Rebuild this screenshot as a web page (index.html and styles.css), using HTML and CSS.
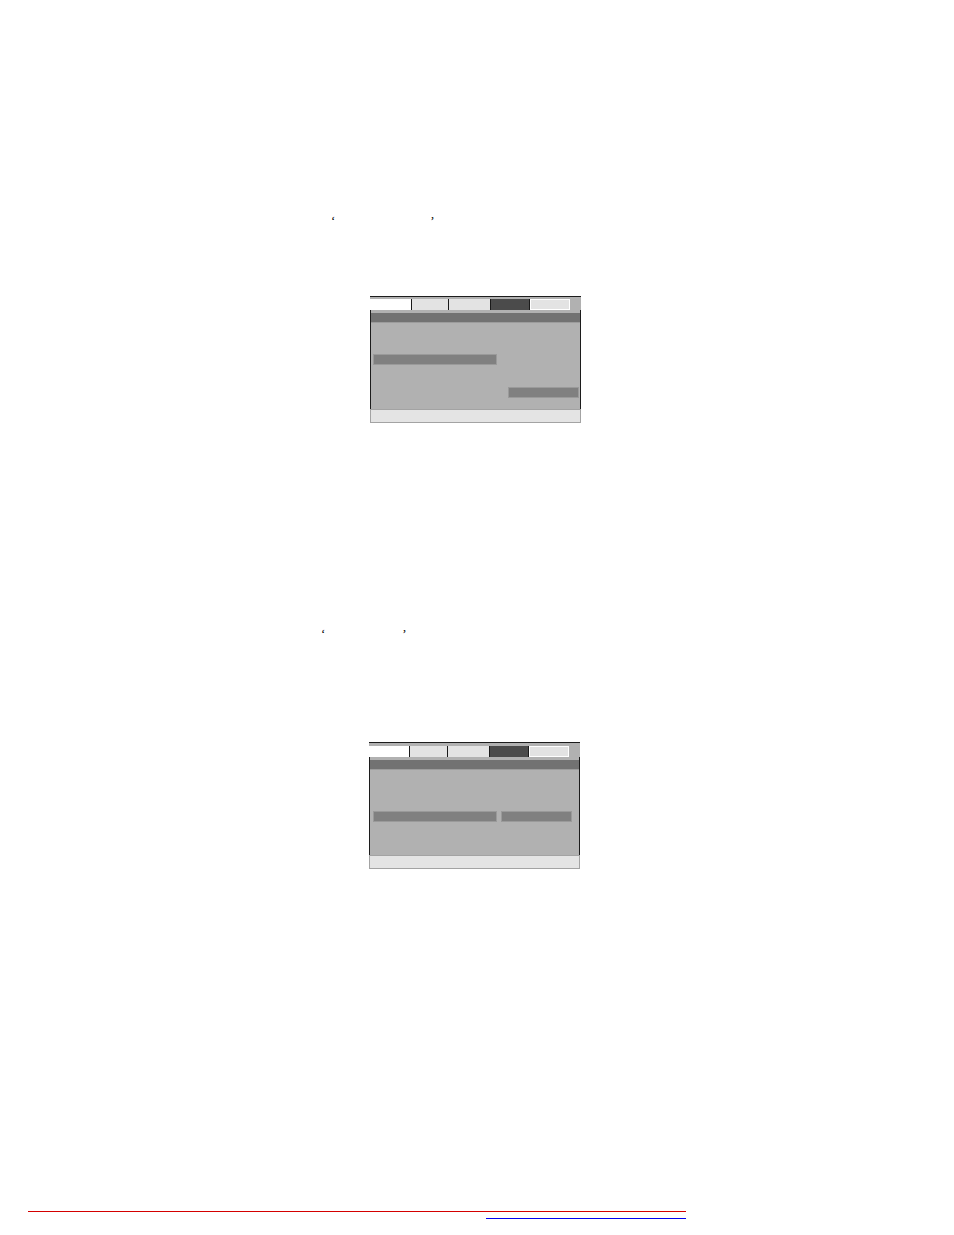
FILE: index.html
```html
<!DOCTYPE html>
<html>
<head>
<meta charset="utf-8">
<link rel="stylesheet" href="styles.css">
</head>
<body>
<div class="page">
  <div class="quote q1"><span class="mark">‘</span><span class="gap g1"></span><span class="mark">’</span></div>

  <div class="screen s1">
    <div class="tabs">
      <div class="tab t-white w41"></div>
      <div class="tab t-light w36"></div>
      <div class="tab t-light w41"></div>
      <div class="tab t-dark w38"></div>
      <div class="tab t-last w39"></div>
    </div>
    <div class="main">
      <div class="header"></div>
      <div class="body b1">
        <div class="bar bar-long first"></div>
        <div class="bar bar-short second"></div>
      </div>
    </div>
    <div class="status"></div>
  </div>

  <div class="quote q2"><span class="mark">‘</span><span class="gap g2"></span><span class="mark">’</span></div>

  <div class="screen s2">
    <div class="tabs">
      <div class="tab t-white w40"></div>
      <div class="tab t-light w37"></div>
      <div class="tab t-light w41"></div>
      <div class="tab t-dark w38"></div>
      <div class="tab t-last w39"></div>
    </div>
    <div class="main">
      <div class="header"></div>
      <div class="body b2">
        <div class="row">
          <div class="bar bar-long"></div>
          <div class="bar bar-short"></div>
        </div>
      </div>
    </div>
    <div class="status"></div>
  </div>

  <div class="rule-red"></div>
  <div class="rule-blue"></div>
</div>
</body>
</html>
```

FILE: styles.css
```css
* { box-sizing: border-box; }
html, body { margin: 0; padding: 0; background: #ffffff; }
body { font-family: "Liberation Serif", "Times New Roman", serif; }
.page { width: 954px; height: 1235px; overflow: hidden; }

.quote { display: flex; align-items: flex-start; height: 14px; font-size: 13px; line-height: 14px; color: #000; }
.q1 { margin-top: 214px; padding-left: 331px; }
.q2 { margin-top: 204px; padding-left: 321px; }
.gap { display: inline-block; }
.g1 { width: 95px; }
.g2 { width: 77px; }

.screen { width: 211px; border-top: 1px solid #1c1c1c; background: #b1b1b1; }
.s1 { margin-top: 68px; margin-left: 370px; }
.s2 { margin-top: 101px; margin-left: 369px; }

.tabs { display: flex; height: 13px; padding-top: 2px; }
.s2 .tabs { height: 14px; padding-top: 3px; }
.tab { height: 11px; border-right: 1px solid #1a1a1a; }
.w36 { width: 37px; } .w37 { width: 38px; } .w38 { width: 39px; }
.w39 { width: 40px; } .w40 { width: 41px; } .w41 { width: 42px; }
.t-white { background: #ffffff; }
.t-light { background: #e3e3e3; }
.t-dark { background: #4b4b4b; }
.t-last { background: #e3e3e3; border: 1px solid #ffffff; }

.main { padding-top: 3px; border-left: 1px solid #1c1c1c; border-right: 1px solid #1c1c1c; }
.header { height: 10px; background: #727272; border-bottom: 1px solid #9c9c9c; }
.body { height: 86px; display: flex; flex-direction: column; }
.s2 .body { height: 85px; }
.bar { height: 11px; background: #808080; border: 1px solid #9a9a9a; }
.bar-long { width: 124px; }
.bar-short { width: 71px; }
.b1 .first { margin-top: 31px; margin-left: 2px; }
.b1 .second { margin-top: 22px; align-self: flex-end; margin-right: 1px; }
.b2 .row { display: flex; gap: 4px; margin-top: 41px; margin-left: 3px; }

.status { height: 14px; background: #e4e4e4; border: 1px solid #a3a3a3; }

.rule-red { margin-top: 342px; margin-left: 28px; width: 658px; height: 1px; background: #d40000; }
.rule-blue { margin-top: 6px; margin-left: 486px; width: 200px; height: 1px; background: #0000f0; }
```
